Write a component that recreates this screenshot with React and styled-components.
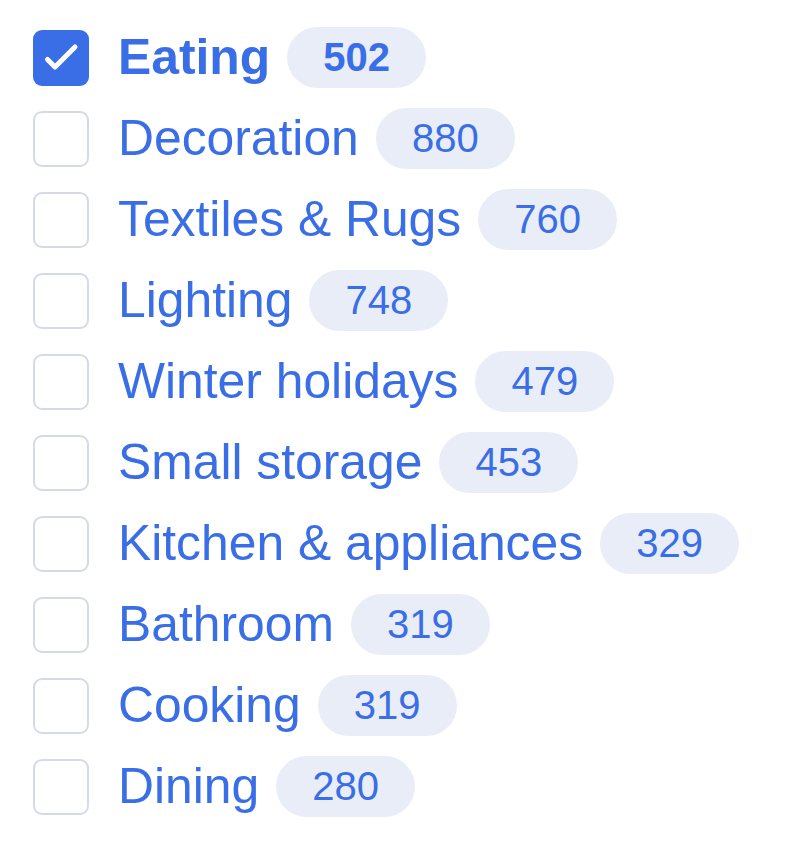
import React, { useState } from "react"
import styled, { createGlobalStyle } from "styled-components"

const GlobalStyle = createGlobalStyle`
  body {
    margin: 0;
    background: #ffffff;
    font-family: "Liberation Sans", Arial, sans-serif;
  }
`

const categories = [
  { name: "Eating", count: 502 },
  { name: "Decoration", count: 880 },
  { name: "Textiles & Rugs", count: 760 },
  { name: "Lighting", count: 748 },
  { name: "Winter holidays", count: 479 },
  { name: "Small storage", count: 453 },
  { name: "Kitchen & appliances", count: 329 },
  { name: "Bathroom", count: 319 },
  { name: "Cooking", count: 319 },
  { name: "Dining", count: 280 },
]

export default function App() {
  const [checked, setChecked] = useState({ Eating: true })

  const toggle = (name) => setChecked((c) => ({ ...c, [name]: !c[name] }))

  return (
    <>
      <GlobalStyle />
      <List>
        {categories.map((cat) => (
          <Row key={cat.name} onClick={() => toggle(cat.name)}>
            <Box checked={!!checked[cat.name]}>
              {checked[cat.name] && (
                <svg width="56" height="56" viewBox="0 0 56 56" fill="none">
                  <path
                    d="M14.5 29.5l7.5 7.5L42 17"
                    stroke="#fff"
                    strokeWidth="5"
                    strokeLinecap="round"
                    strokeLinejoin="round"
                  />
                </svg>
              )}
            </Box>
            <Label bold={!!checked[cat.name]}>{cat.name}</Label>
            <Count bold={!!checked[cat.name]}>{cat.count}</Count>
          </Row>
        ))}
      </List>
    </>
  )
}

const List = styled.ul`
  list-style: none;
  margin: 0;
  padding: 27px 0 0 33px;
  display: flex;
  flex-direction: column;
  gap: 20px;
`

const Row = styled.li`
  display: flex;
  align-items: center;
  height: 61px;
  cursor: pointer;
  color: #3a6ee6;
`

const Box = styled.span`
  box-sizing: border-box;
  position: relative;
  width: 56px;
  height: 56px;
  border-radius: 9px;
  display: flex;
  align-items: center;
  justify-content: center;
  background: ${(p) => (p.checked ? "#3a6ee6" : "#ffffff")};
  border: ${(p) => (p.checked ? "none" : "2px solid #d6dae6")};
  margin-right: 29px;
  flex-shrink: 0;
`

const Label = styled.span`
  font-size: 49.8px;
  font-weight: ${(p) => (p.bold ? 700 : 400)};
  margin-right: 17px;
  line-height: 1;
  white-space: nowrap;
`

const Count = styled.span`
  box-sizing: border-box;
  height: 61px;
  min-width: 139px;
  padding: 0 33px;
  border-radius: 31px;
  background: #e9edf7;
  display: flex;
  align-items: center;
  justify-content: center;
  font-size: 40px;
  font-weight: ${(p) => (p.bold ? 700 : 400)};
`
